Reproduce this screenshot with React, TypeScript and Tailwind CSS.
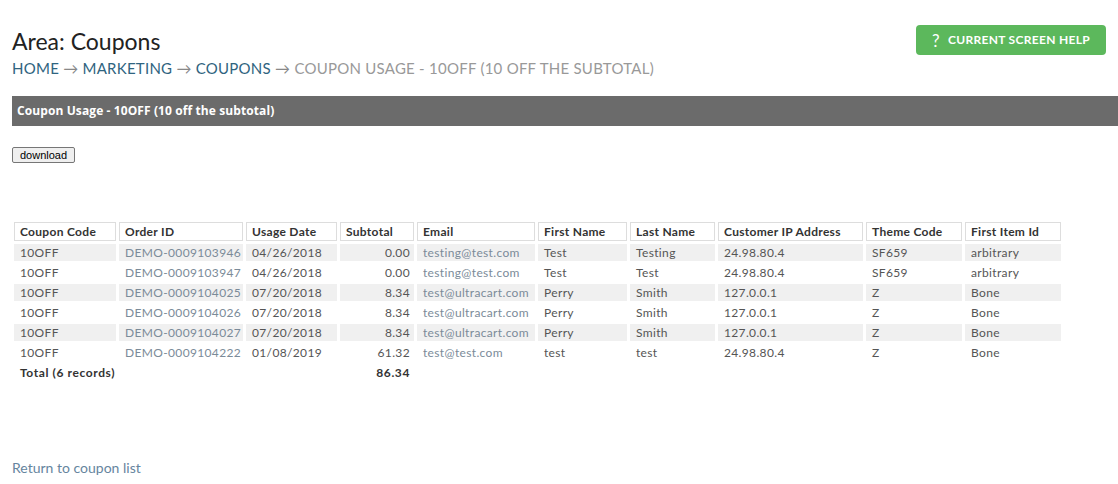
import React from 'react';

type UsageRow = {
  code: string;
  orderId: string;
  date: string;
  subtotal: string;
  email: string;
  first: string;
  last: string;
  ip: string;
  theme: string;
  item: string;
};

const rows: UsageRow[] = [
  { code: '10OFF', orderId: 'DEMO-0009103946', date: '04/26/2018', subtotal: '0.00', email: 'testing@test.com', first: 'Test', last: 'Testing', ip: '24.98.80.4', theme: 'SF659', item: 'arbitrary' },
  { code: '10OFF', orderId: 'DEMO-0009103947', date: '04/26/2018', subtotal: '0.00', email: 'testing@test.com', first: 'Test', last: 'Test', ip: '24.98.80.4', theme: 'SF659', item: 'arbitrary' },
  { code: '10OFF', orderId: 'DEMO-0009104025', date: '07/20/2018', subtotal: '8.34', email: 'test@ultracart.com', first: 'Perry', last: 'Smith', ip: '127.0.0.1', theme: 'Z', item: 'Bone' },
  { code: '10OFF', orderId: 'DEMO-0009104026', date: '07/20/2018', subtotal: '8.34', email: 'test@ultracart.com', first: 'Perry', last: 'Smith', ip: '127.0.0.1', theme: 'Z', item: 'Bone' },
  { code: '10OFF', orderId: 'DEMO-0009104027', date: '07/20/2018', subtotal: '8.34', email: 'test@ultracart.com', first: 'Perry', last: 'Smith', ip: '127.0.0.1', theme: 'Z', item: 'Bone' },
  { code: '10OFF', orderId: 'DEMO-0009104222', date: '01/08/2019', subtotal: '61.32', email: 'test@test.com', first: 'test', last: 'test', ip: '24.98.80.4', theme: 'Z', item: 'Bone' },
];

const headers = [
  { label: 'Coupon Code', w: 'w-[102px]' },
  { label: 'Order ID', w: 'w-[124px]' },
  { label: 'Usage Date', w: 'w-[91px]' },
  { label: 'Subtotal', w: 'w-[74px]' },
  { label: 'Email', w: 'w-[118px]' },
  { label: 'First Name', w: 'w-[89px]' },
  { label: 'Last Name', w: 'w-[85px]' },
  { label: 'Customer IP Address', w: 'w-[145px]' },
  { label: 'Theme Code', w: 'w-[96px]' },
  { label: 'First Item Id', w: 'w-[96px]' },
];

const td = 'h-[17px] p-0 pl-[6px] align-middle leading-[17px] whitespace-nowrap overflow-hidden';
const link = 'text-[#7b8b99]';

export default function App() {
  return (
    <div className="min-h-[484px] bg-white pl-3 font-['Lato',sans-serif] text-[#555]">
      {/* page heading + help button */}
      <div className="flex items-start justify-between pr-3">
        <div className="pt-[28px]">
          <h1 className="text-[23px] leading-[27px] text-[#222]">Area: Coupons</h1>
          <div className="mt-[3px] h-[20px] text-[15px] leading-[20px] tracking-[0.25px] uppercase">
            <a className="text-[#2f6480]">Home</a>
            <span className="text-[#888]"> → </span>
            <a className="text-[#2f6480]">Marketing</a>
            <span className="text-[#888]"> → </span>
            <a className="text-[#2f6480]">Coupons</a>
            <span className="text-[#888]"> → </span>
            <span className="text-[#999]">Coupon Usage - 10OFF (10 off the subtotal)</span>
          </div>
        </div>
        <button className="mt-[25px] flex h-[30px] w-[190px] items-center justify-center gap-[8px] rounded-[4px] bg-[#5cb85c] text-[12px] font-bold tracking-[0.3px] text-white">
          <span className="text-[17px] leading-none font-normal">?</span>
          <span>CURRENT SCREEN HELP</span>
        </button>
      </div>

      {/* section bar */}
      <div className="mt-[18px] flex h-[30px] items-center bg-[#6b6b6b] pl-[5px] font-['Open_Sans',sans-serif] text-[12px] font-bold tracking-[0.1px] text-white">
        Coupon Usage - 10OFF (10 off the subtotal)
      </div>

      <button className="mt-[21px] block h-[16px] rounded-[2px] border border-[#767676] bg-[#efefef] px-[7px] font-['Liberation_Sans',Arial,sans-serif] text-[11px] leading-[14px] text-black">
        download
      </button>

      {/* usage table */}
      <table className="-ml-px mt-[56px] table-fixed border-separate border-spacing-[3px] text-[12px] tracking-[0.35px]">
        <thead>
          <tr>
            {headers.map((h) => (
              <th
                key={h.label}
                className={`${h.w} h-[19px] border border-[#ddd] p-0 pl-[5px] text-left align-middle leading-[17px] font-bold whitespace-nowrap text-[#333] tracking-[0.3px]`}
              >
                {h.label}
              </th>
            ))}
          </tr>
        </thead>
        <tbody>
          {rows.map((r, i) => (
            <tr key={r.orderId} className={i % 2 === 0 ? '[&>td]:bg-[#f0f0f0]' : ''}>
              <td className={td}>{r.code}</td>
              <td className={`${td} ${link}`}>{r.orderId}</td>
              <td className={td}>{r.date}</td>
              <td className={`${td} pr-[4px] text-right`}>{r.subtotal}</td>
              <td className={`${td} ${link}`}>{r.email}</td>
              <td className={td}>{r.first}</td>
              <td className={td}>{r.last}</td>
              <td className={td}>{r.ip}</td>
              <td className={td}>{r.theme}</td>
              <td className={td}>{r.item}</td>
            </tr>
          ))}
          <tr className="font-bold tracking-[0.6px] text-[#333]">
            <td colSpan={3} className={td}>Total (6 records)</td>
            <td className={`${td} pr-[4px] text-right`}>86.34</td>
            <td colSpan={6} className={td}></td>
          </tr>
        </tbody>
      </table>

      <a className="mt-[74px] block text-[14px] leading-[20px] text-[#66859e]">Return to coupon list</a>
    </div>
  );
}
